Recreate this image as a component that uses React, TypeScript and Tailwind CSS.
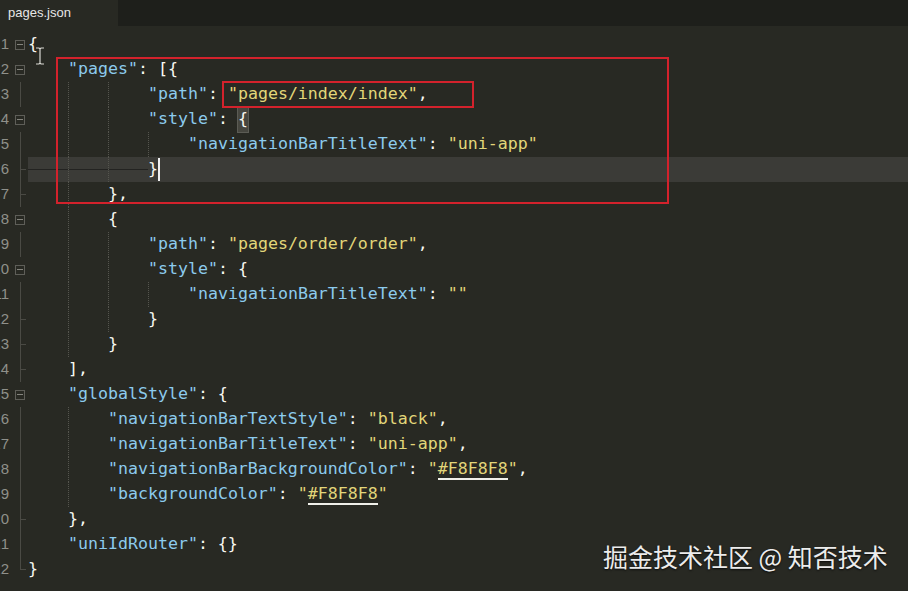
import React from "react";

type Fold = "box" | "line" | "tick" | "end" | "none";
type Line = { indent: number; text: string; fold: Fold; boxLast?: boolean; current?: boolean };

const lines: Line[] = [
  { indent: 0, text: "{", fold: "box" },
  { indent: 4, text: '"pages": [{', fold: "box" },
  { indent: 12, text: '"path": "pages/index/index",', fold: "line" },
  { indent: 12, text: '"style": {', fold: "box", boxLast: true },
  { indent: 16, text: '"navigationBarTitleText": "uni-app"', fold: "line" },
  { indent: 12, text: "}", fold: "tick", current: true },
  { indent: 8, text: "},", fold: "tick" },
  { indent: 8, text: "{", fold: "box" },
  { indent: 12, text: '"path": "pages/order/order",', fold: "line" },
  { indent: 12, text: '"style": {', fold: "box" },
  { indent: 16, text: '"navigationBarTitleText": ""', fold: "line" },
  { indent: 12, text: "}", fold: "tick" },
  { indent: 8, text: "}", fold: "tick" },
  { indent: 4, text: "],", fold: "tick" },
  { indent: 4, text: '"globalStyle": {', fold: "box" },
  { indent: 8, text: '"navigationBarTextStyle": "black",', fold: "line" },
  { indent: 8, text: '"navigationBarTitleText": "uni-app",', fold: "line" },
  { indent: 8, text: '"navigationBarBackgroundColor": "#F8F8F8",', fold: "line" },
  { indent: 8, text: '"backgroundColor": "#F8F8F8"', fold: "line" },
  { indent: 4, text: "},", fold: "tick" },
  { indent: 4, text: '"uniIdRouter": {}', fold: "line" },
  { indent: 0, text: "}", fold: "end" },
];

function Tokens({ text }: { text: string }) {
  const parts = text.match(/"[^"]*"|[^"]+/g) ?? [];
  return (
    <>
      {parts.map((p, i) => {
        if (!p.startsWith('"')) return <span key={i} className="text-[#f8f8f2]">{p}</span>;
        const next = parts[i + 1] ?? "";
        const isKey = next.trimStart().startsWith(":");
        if (p === '"#F8F8F8"') {
          return (
            <span key={i} className="text-[#e2d679]">
              "<span className="border-b-2 border-[#f0f0ea]">#F8F8F8</span>"
            </span>
          );
        }
        return (
          <span key={i} className={isKey ? "text-[#8ccbed]" : "text-[#e2d679]"}>
            {p}
          </span>
        );
      })}
    </>
  );
}

function FoldMark({ fold }: { fold: Fold }) {
  if (fold === "box")
    return (
      <div className="flex h-full w-[10px] items-center justify-center">
        <div className="flex h-[10px] w-[10px] items-center justify-center border border-[#5e5e58]">
          <div className="h-px w-[6px] bg-[#85857e]" />
        </div>
      </div>
    );
  if (fold === "line")
    return (
      <div className="flex h-full w-[10px] justify-center">
        <div className="h-full w-px bg-[#4a4a44]" />
      </div>
    );
  if (fold === "tick")
    return (
      <div className="relative h-full w-[10px]">
        <div className="ml-[5px] h-full w-px bg-[#4a4a44]" />
        <div className="absolute left-[5px] top-[12px] h-px w-[6px] bg-[#4a4a44]" />
      </div>
    );
  if (fold === "end")
    return (
      <div className="h-full w-[10px]">
        <div className="ml-[5px] h-[13px] w-[6px] border-b border-l border-[#4a4a44]" />
      </div>
    );
  return <div className="w-[10px]" />;
}

function CodeLine({ line, n }: { line: Line; n: number }) {
  const cells = Math.floor(line.indent / 4);
  const body = line.boxLast ? line.text.slice(0, -1) : line.text;
  const last = line.boxLast ? line.text.slice(-1) : "";
  return (
    <div className="flex h-[25px]">
      {/* gutter: scrolled so only the last digit shows */}
      <div className="flex w-[28px] shrink-0 items-stretch">
        <div className="flex w-[9px] justify-end self-center overflow-hidden whitespace-nowrap font-['Liberation_Sans',sans-serif] text-[15px] text-[#8f908a]">
          {n}
        </div>
        <div className="ml-[6px]">
          <FoldMark fold={line.fold} />
        </div>
      </div>
      <div className={`flex flex-1 items-stretch ${line.current ? "bg-[#3b3b37]" : ""}`}>
        {Array.from({ length: cells }).map((_, i) => (
          <span
            key={i}
            className={`flex h-full w-[40px] items-center ${i > 0 ? "border-l border-dotted border-[#55554e]" : ""}`}
          >
            {line.current && <span className="h-px w-full bg-[#232321]" />}
          </span>
        ))}
        <span className="flex items-center whitespace-pre">
          <Tokens text={body} />
          {last && <span className="bg-[#46463f] text-[#f8f8f2] outline outline-1 outline-[#5c5c55]">{last}</span>}
        </span>
        {line.current && (
          <span className="flex items-center">
            <span className="h-[23px] w-[2px] bg-[#f0f0f0]" />
          </span>
        )}
      </div>
    </div>
  );
}

export default function App() {
  return (
    <div className="relative h-[591px] w-[908px] overflow-hidden bg-[#282923]">
      {/* tab bar */}
      <div className="flex h-[26px] bg-[#1e1f1b]">
        <div className="flex w-[118px] items-center bg-[#282923] pl-[8px] font-['Liberation_Sans',sans-serif] text-[13px] text-[#e6e6e6]">
          pages.json
        </div>
      </div>

      {/* editor */}
      <div className="pt-[6px] font-['DejaVu_Sans_Mono',monospace] text-[16.6px]">
        {lines.map((l, i) => (
          <CodeLine key={i} line={l} n={i + 1} />
        ))}
      </div>

      {/* mouse I-beam */}
      <svg className="absolute left-[35px] top-[47px]" width="10" height="18" viewBox="0 0 10 18">
        <path d="M1 1h3l1 1 1-1h3M5 2v14M1 17h3l1-1 1 1h3" stroke="#d8d8d2" strokeWidth="1.2" fill="none" />
      </svg>

      {/* annotation boxes */}
      <div className="absolute left-[56px] top-[57px] h-[147px] w-[613px] border-2 border-[#d3222c]" />
      <div className="absolute left-[222px] top-[81px] h-[27px] w-[252px] border-2 border-[#d3222c]" />

      {/* watermark */}
      <div className="absolute left-[603px] top-[538px] whitespace-nowrap font-['Noto_Sans_CJK_SC',sans-serif] text-[25px] text-[#ececec] [text-shadow:0_1px_2px_rgba(0,0,0,0.8)]">
        掘金技术社区 @ 知否技术
      </div>
    </div>
  );
}
